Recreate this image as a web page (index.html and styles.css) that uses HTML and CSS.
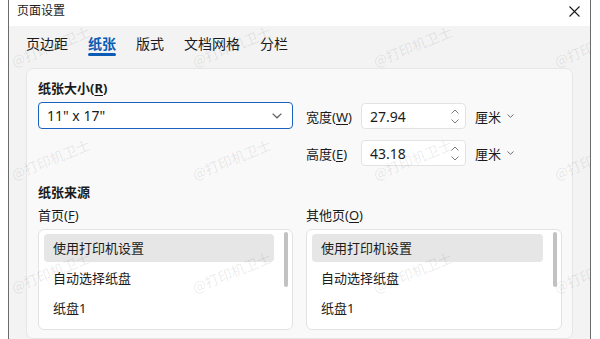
FILE: index.html
```html
<!DOCTYPE html>
<html lang="zh-CN">
<head>
<meta charset="utf-8">
<title>页面设置</title>
<link rel="stylesheet" href="styles.css">
</head>
<body>
<div class="window">
  <div class="titlebar">
    <span class="title">页面设置</span>
    <svg class="close" width="11" height="11" viewBox="0 0 11 11"><path d="M0.5 0.5 L10.5 10.5 M10.5 0.5 L0.5 10.5" stroke="#1a1a1a" stroke-width="1.1" fill="none"/></svg>
  </div>
  <div class="body">
    <div class="tabs">
      <div class="tab">页边距</div>
      <div class="tab active">纸张</div>
      <div class="tab">版式</div>
      <div class="tab">文档网格</div>
      <div class="tab">分栏</div>
    </div>
    <div class="panel">
      <div class="size-grid">
        <div class="label bold">纸张大小(<u>R</u>)</div>
        <div></div>
        <div class="select">
          <span>11" x 17"</span>
          <svg width="10" height="6" viewBox="0 0 10 6"><path d="M0.6 0.6 L5 4.8 L9.4 0.6" stroke="#5c5c5c" stroke-width="1.2" fill="none"/></svg>
        </div>
        <div class="dim-row first">
          <span class="dim-label">宽度(<u>W</u>)</span>
          <div class="num">
            <span>27.94</span>
            <span class="spin">
              <svg width="8" height="5" viewBox="0 0 8 5"><path d="M0.5 4.5 L4 1 L7.5 4.5" stroke="#7a7a7a" stroke-width="1" fill="none"/></svg>
              <svg width="8" height="5" viewBox="0 0 8 5"><path d="M0.5 0.5 L4 4 L7.5 0.5" stroke="#7a7a7a" stroke-width="1" fill="none"/></svg>
            </span>
          </div>
          <span class="unit">厘米</span>
          <svg class="unit-chev" width="7" height="4" viewBox="0 0 7 4"><path d="M0.5 0.5 L3.5 3.3 L6.5 0.5" stroke="#6e6e6e" stroke-width="1" fill="none"/></svg>
        </div>
        <div></div>
        <div class="dim-row second">
          <span class="dim-label">高度(<u>E</u>)</span>
          <div class="num">
            <span>43.18</span>
            <span class="spin">
              <svg width="8" height="5" viewBox="0 0 8 5"><path d="M0.5 4.5 L4 1 L7.5 4.5" stroke="#7a7a7a" stroke-width="1" fill="none"/></svg>
              <svg width="8" height="5" viewBox="0 0 8 5"><path d="M0.5 0.5 L4 4 L7.5 0.5" stroke="#7a7a7a" stroke-width="1" fill="none"/></svg>
            </span>
          </div>
          <span class="unit">厘米</span>
          <svg class="unit-chev" width="7" height="4" viewBox="0 0 7 4"><path d="M0.5 0.5 L3.5 3.3 L6.5 0.5" stroke="#6e6e6e" stroke-width="1" fill="none"/></svg>
        </div>
      </div>
      <div class="label bold source">纸张来源</div>
      <div class="source-grid">
        <div class="label">首页(<u>F</u>)</div>
        <div class="label">其他页(<u>O</u>)</div>
        <div class="list">
          <div class="items">
            <div class="item selected">使用打印机设置</div>
            <div class="item">自动选择纸盘</div>
            <div class="item">纸盘1</div>
          </div>
          <div class="scroll"></div>
        </div>
        <div class="list">
          <div class="items">
            <div class="item selected">使用打印机设置</div>
            <div class="item">自动选择纸盘</div>
            <div class="item">纸盘1</div>
          </div>
          <div class="scroll"></div>
        </div>
      </div>
    </div>
  </div>
  <div class="watermarks">
    <span>@打印机卫士</span><span>@打印机卫士</span><span>@打印机卫士</span><span>@打印机卫士</span>
    <span>@打印机卫士</span><span>@打印机卫士</span><span>@打印机卫士</span><span>@打印机卫士</span>
    <span>@打印机卫士</span><span>@打印机卫士</span><span>@打印机卫士</span><span>@打印机卫士</span>
  </div>
</div>
</body>
</html>
```
FILE: styles.css
```css
* { box-sizing: border-box; }
html, body { margin: 0; padding: 0; background: #ffffff; }
body {
  font-family: "Noto Sans", "Noto Sans CJK SC", sans-serif;
  color: #1b1b1b;
  overflow: hidden;
  height: 339px;
}
u { text-decoration-thickness: 1px; text-underline-offset: 2px; }
.window {
  position: relative;
  margin-left: 8px;
  width: 583px;
  height: 339px;
  border-left: 1px solid #6b6b6b;
  border-right: 1px solid #6b6b6b;
  background: #f3f3f3;
  overflow: hidden;
  display: flex;
  flex-direction: column;
}
.titlebar {
  height: 26px;
  background: #ffffff;
  display: flex;
  align-items: center;
  justify-content: space-between;
  padding: 0 10px 4px 8px;
  flex: none;
}
.title { font-size: 12px; line-height: 16px; }
.close { display: block; }
.body { flex: 1; display: flex; flex-direction: column; }
.tabs {
  display: flex;
  gap: 20px;
  padding: 8px 0 0 17px;
}
.tab {
  font-size: 14px;
  line-height: 19px;
  display: flex;
  flex-direction: column;
  color: #1b1b1b;
}
.tab::after {
  content: "";
  display: block;
  height: 3px;
  border-radius: 2px;
  background: transparent;
}
.tab.active { color: #0a5bb5; font-weight: 700; }
.tab.active::after { background: #0a5bb5; }
.panel {
  margin: 12px 17px 0 17px;
  background: #f9f9f9;
  border: 1px solid #e6e6e6;
  border-radius: 7px;
  padding: 9px 11px 0 11px;
  flex: 1;
}
.label { font-size: 13px; line-height: 20px; }
.bold { font-weight: 700; }
.size-grid {
  display: grid;
  grid-template-columns: 255px 1fr;
  column-gap: 13px;
  grid-template-rows: 20px 27px auto;
  row-gap: 4px;
}
.select {
  height: 27px;
  background: #ffffff;
  border: 1px solid #1a62bf;
  border-radius: 4px;
  display: flex;
  align-items: center;
  justify-content: space-between;
  padding: 0 10px 0 8px;
  font-size: 14px;
}
.select svg { display: block; }
.dim-row {
  display: flex;
  align-items: center;
  height: 26px;
  font-size: 13px;
}
.dim-row.first { margin-top: 1px; }
.dim-row.second { margin-top: 7px; }
.dim-label { width: 55px; flex: none; }
.num {
  width: 105px;
  height: 26px;
  background: #ffffff;
  border: 1px solid #e3e3e3;
  border-radius: 4px;
  display: flex;
  align-items: center;
  justify-content: space-between;
  padding: 0 6px 0 8px;
  font-size: 14px;
}
.spin { display: flex; flex-direction: column; gap: 5px; }
.spin svg { display: block; }
.unit { margin-left: 9px; }
.unit-chev { margin-left: 6px; display: block; }
.source { margin-top: 16px; }
.source-grid {
  display: grid;
  grid-template-columns: 255px 256px;
  column-gap: 13px;
  row-gap: 3px;
  margin-top: 3px;
}
.list {
  height: 101px;
  margin-top: 1px;
  background: #ffffff;
  border: 1px solid #e3e3e3;
  border-radius: 6px;
  display: flex;
  padding: 4px 4px 0 5px;
}
.items { flex: 1; display: flex; flex-direction: column; gap: 2px; }
.item {
  height: 28px;
  line-height: 28px;
  font-size: 13px;
  padding-left: 9px;
  border-radius: 4px;
}
.item.selected { background: #e6e6e6; }
.scroll {
  width: 4px;
  height: 55px;
  margin: -2px 0 0 10px;
  border-radius: 2px;
  background: #c2c2c2;
}
.watermarks {
  position: absolute;
  left: -49px;
  top: -11px;
  display: grid;
  grid-template-columns: repeat(4, 181px);
  grid-template-rows: repeat(3, 113px);
  pointer-events: none;
}
.watermarks span {
  place-self: center;
  font-family: "Noto Sans CJK SC", sans-serif;
  font-size: 14px;
  color: rgba(0, 0, 0, 0.09);
  transform: rotate(-22deg);
  white-space: nowrap;
}
```
